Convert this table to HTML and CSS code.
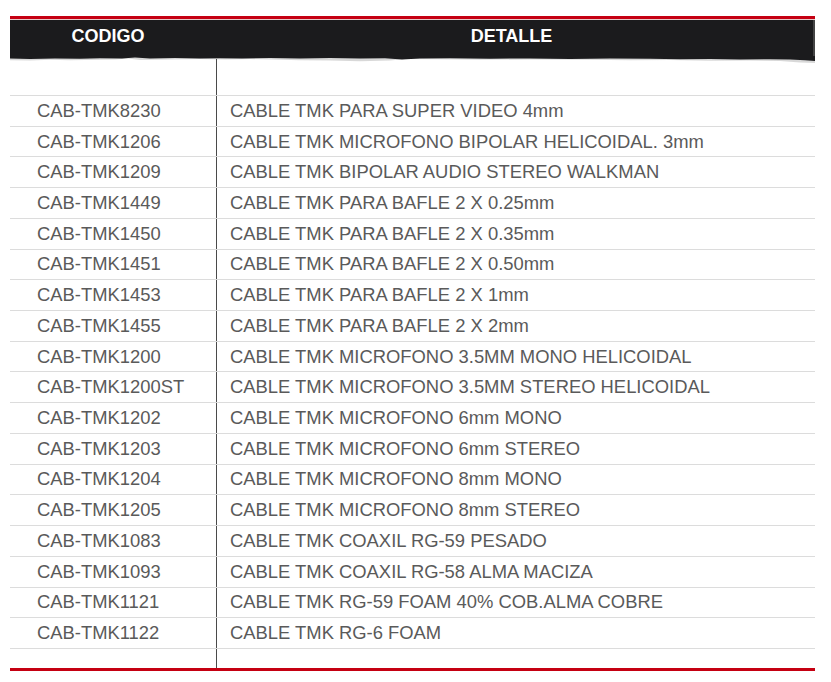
FILE: index.html
```html
<!DOCTYPE html>
<html lang="es">
<head>
<meta charset="utf-8">
<title>Cables TMK</title>
<link rel="stylesheet" href="styles.css">
</head>
<body>
<div class="sheet">
  <div class="rule-red"></div>
  <div class="rule-pink"></div>
  <div class="head">
    <div class="h-code">CODIGO</div>
    <div class="h-detail">DETALLE</div>
  </div>
  <svg class="torn" width="805" height="9" viewBox="0 0 805 9" preserveAspectRatio="none">
    <rect x="0" y="0" width="805" height="9" fill="#ffffff"/>
    <path d="M0 0 H805 V7 L790 6.5 L770 5 L740 4.5 L700 4.8 L660 4 L620 4.2 L580 3.8 L520 3.5 L470 3.8 L430 3.2 L395 3 L380 4.5 L350 5.2 L320 4.6 L290 4.2 L262 3.6 L240 3 L215 3.4 L190 3 L160 3.5 L130 4 L118 2.6 L105 3.4 L90 3.8 L60 4.2 L40 3.8 L20 4.4 L0 4.2 Z" fill="#b8b8b8" opacity="0.55"/>
    <path d="M0 0 H805 V5 L795 4.2 L780 3.6 L760 3.2 L730 3.4 L700 3 L670 3.3 L640 2.8 L600 2.6 L560 2.9 L520 2.4 L480 2.7 L440 2.2 L410 2.5 L392 3.4 L375 2.2 L350 2.6 L320 2.1 L290 2.4 L260 1.9 L232 2.5 L210 2.2 L190 2.6 L165 2.1 L140 2.5 L125 1.6 L112 2.4 L90 2.2 L70 2.8 L45 2.4 L20 2.9 L0 2.6 Z" fill="#1b1b1d"/>
    <rect x="206" y="3" width="1" height="6" fill="#4a4a4a"/>
  </svg>
  <div class="rows">
    <div class="row spacer"><div class="c1"></div><div class="c2"></div></div>
    <div class="row"><div class="c1">CAB-TMK8230</div><div class="c2">CABLE TMK PARA SUPER VIDEO 4mm</div></div>
    <div class="row"><div class="c1">CAB-TMK1206</div><div class="c2">CABLE TMK MICROFONO BIPOLAR HELICOIDAL. 3mm</div></div>
    <div class="row"><div class="c1">CAB-TMK1209</div><div class="c2">CABLE TMK BIPOLAR AUDIO STEREO WALKMAN</div></div>
    <div class="row"><div class="c1">CAB-TMK1449</div><div class="c2">CABLE TMK PARA BAFLE 2 X 0.25mm</div></div>
    <div class="row"><div class="c1">CAB-TMK1450</div><div class="c2">CABLE TMK PARA BAFLE 2 X 0.35mm</div></div>
    <div class="row"><div class="c1">CAB-TMK1451</div><div class="c2">CABLE TMK PARA BAFLE 2 X 0.50mm</div></div>
    <div class="row"><div class="c1">CAB-TMK1453</div><div class="c2">CABLE TMK PARA BAFLE 2 X 1mm</div></div>
    <div class="row"><div class="c1">CAB-TMK1455</div><div class="c2">CABLE TMK PARA BAFLE 2 X 2mm</div></div>
    <div class="row"><div class="c1">CAB-TMK1200</div><div class="c2">CABLE TMK MICROFONO 3.5MM MONO HELICOIDAL</div></div>
    <div class="row"><div class="c1">CAB-TMK1200ST</div><div class="c2">CABLE TMK MICROFONO 3.5MM STEREO HELICOIDAL</div></div>
    <div class="row"><div class="c1">CAB-TMK1202</div><div class="c2">CABLE TMK MICROFONO 6mm MONO</div></div>
    <div class="row"><div class="c1">CAB-TMK1203</div><div class="c2">CABLE TMK MICROFONO 6mm STEREO</div></div>
    <div class="row"><div class="c1">CAB-TMK1204</div><div class="c2">CABLE TMK MICROFONO 8mm MONO</div></div>
    <div class="row"><div class="c1">CAB-TMK1205</div><div class="c2">CABLE TMK MICROFONO 8mm STEREO</div></div>
    <div class="row"><div class="c1">CAB-TMK1083</div><div class="c2">CABLE TMK COAXIL RG-59 PESADO</div></div>
    <div class="row"><div class="c1">CAB-TMK1093</div><div class="c2">CABLE TMK COAXIL RG-58 ALMA MACIZA</div></div>
    <div class="row"><div class="c1">CAB-TMK1121</div><div class="c2">CABLE TMK RG-59 FOAM 40% COB.ALMA COBRE</div></div>
    <div class="row"><div class="c1">CAB-TMK1122</div><div class="c2">CABLE TMK RG-6 FOAM</div></div>
    <div class="row tail"><div class="c1"></div><div class="c2"></div></div>
  </div>
  <div class="rule-red bottom"></div>
</div>
</body>
</html>
```
FILE: styles.css
```css
html, body {
  margin: 0;
  padding: 0;
  background: #ffffff;
}
.sheet {
  width: 805px;
  margin-left: 10px;
  padding-top: 16px;
  font-family: "Liberation Sans", Arial, sans-serif;
}
.rule-red {
  height: 3px;
  background: #c50012;
}
.rule-pink {
  height: 1px;
  background: #e6c9c9;
}
.head {
  display: grid;
  grid-template-columns: 206px 1fr;
  height: 36px;
  background: #1b1b1d;
  color: #ffffff;
  font-weight: bold;
  font-size: 18px;
  box-shadow: inset -2px 0 0 #444;
}
.h-code, .h-detail {
  display: flex;
  justify-content: center;
  padding-top: 6px;
}
.h-code { padding-right: 10px; }
.h-detail { padding-right: 8px; }
.torn {
  display: block;
}
.rows {
  display: flex;
  flex-direction: column;
}
.row {
  display: grid;
  grid-template-columns: 206px 1fr;
  height: 30.72px;
  box-sizing: border-box;
  border-top: 1px solid #dcdcdc;
  color: #5a5a5a;
  font-size: 18.4px;
}
.row.spacer {
  border-top: none;
  height: 30px;
}
.row.tail {
  height: 20px;
}
.c1, .c2 {
  display: flex;
  align-items: center;
  white-space: nowrap;
}
.c1 {
  padding-left: 27px;
}
.c2 {
  border-left: 1px solid #4a4a4a;
  padding-left: 13px;
}
.rule-red.bottom {
  height: 3px;
}
```
